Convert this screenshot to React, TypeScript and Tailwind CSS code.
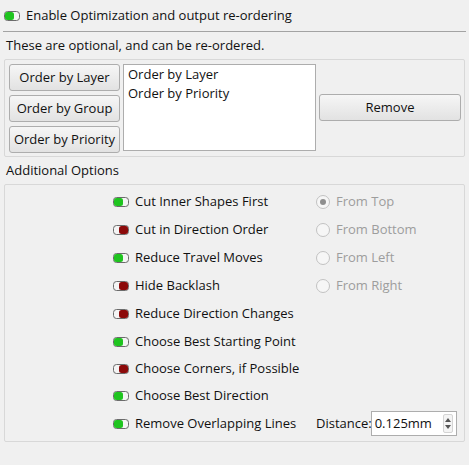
import React from 'react';

// Small pill switch used by the optimizer options: green knob when on, dark red when off.
function Toggle({ on }: { on: boolean }) {
  return (
    <svg width="16" height="10" viewBox="0 0 16 10" className="shrink-0">
      <rect x="0.5" y="0.5" width="15" height="9" rx="3" fill="#f4f4f4" stroke="#6b6b6b" />
      {on ? (
        <rect x="1" y="1" width="9" height="8" rx="2.5" fill="#1fc41f" />
      ) : (
        <rect x="6" y="1" width="9" height="8" rx="2.5" fill="#8c0a0a" />
      )}
    </svg>
  );
}

function Radio({ checked, label }: { checked?: boolean; label: string }) {
  return (
    <div className="flex items-center gap-[6px] text-[#9d9d9d]">
      <span className="w-[14px] h-[14px] rounded-full border border-[#c2c2c2] bg-[#f6f6f6] flex items-center justify-center">
        {checked && <span className="w-[6px] h-[6px] rounded-full bg-[#8e8e8e]" />}
      </span>
      <span>{label}</span>
    </div>
  );
}

function Button({ children, className = '' }: { children: React.ReactNode; className?: string }) {
  return (
    <button
      className={`border border-[#adadad] rounded-[3px] bg-gradient-to-b from-[#f6f6f6] to-[#e2e2e2] text-[#111] ${className}`}
    >
      {children}
    </button>
  );
}

const options: { label: string; on: boolean; right?: React.ReactNode }[] = [
  { label: 'Cut Inner Shapes First', on: true, right: <Radio checked label="From Top" /> },
  { label: 'Cut in Direction Order', on: false, right: <Radio label="From Bottom" /> },
  { label: 'Reduce Travel Moves', on: true, right: <Radio label="From Left" /> },
  { label: 'Hide Backlash', on: false, right: <Radio label="From Right" /> },
  { label: 'Reduce Direction Changes', on: false },
  { label: 'Choose Best Starting Point', on: true },
  { label: 'Choose Corners, if Possible', on: false },
  { label: 'Choose Best Direction', on: true },
];

export default function App() {
  return (
    <div
      className="w-[469px] h-[465px] bg-[#f0f0f0] text-[13px] text-[#111] overflow-hidden"
      style={{ fontFamily: '"Open Sans", "Noto Sans", sans-serif' }}
    >
      <div className="h-[31px] flex items-center gap-[6px] pl-[4px] pt-[1px]">
        <Toggle on />
        <span>Enable Optimization and output re-ordering</span>
      </div>
      <div className="mx-[3px] h-px bg-[#a3a3a3]" />
      <div className="h-[27px] flex items-center pl-[6px] pt-[1px]">These are optional, and can be re-ordered.</div>

      <div className="mx-[4px] h-[98px] border border-[#d8d8d8] rounded-[2px] flex items-start pt-[4px] pl-[4px] pr-[3px]">
        <div className="flex flex-col gap-[4px]">
          <Button className="w-[111px] h-[27px]">Order by Layer</Button>
          <Button className="w-[111px] h-[27px]">Order by Group</Button>
          <Button className="w-[111px] h-[27px]">Order by Priority</Button>
        </div>
        <div className="ml-[3px] w-[193px] h-[87px] bg-white border border-[#adadad] pl-[4px] leading-[19px]">
          <div>Order by Layer</div>
          <div>Order by Priority</div>
        </div>
        <Button className="ml-[3px] mt-[30px] flex-1 h-[27px]">Remove</Button>
      </div>

      <div className="h-[27px] flex items-center pl-[6px]">Additional Options</div>

      <div className="mx-[4px] h-[258px] border border-[#d8d8d8] rounded-[2px] pt-[3px]">
        {options.map((o, i) => (
          <div key={o.label} className={`flex items-center ${i < 5 ? 'h-[28px]' : 'h-[27px]'}`}>
            <div className="w-[311px] flex items-center gap-[6px] pl-[108px]">
              <Toggle on={o.on} />
              <span>{o.label}</span>
            </div>
            {o.right}
          </div>
        ))}
        <div className="flex items-center h-[29px]">
          <div className="w-[311px] flex items-center gap-[6px] pl-[108px]">
            <Toggle on />
            <span>Remove Overlapping Lines</span>
          </div>
          <span className="-mr-[1px]">Distance:</span>
          <div className="w-[86px] h-[25px] bg-white border border-[#adadad] flex items-center pl-[3px]">
            <span className="flex-1">0.125mm</span>
            <div className="w-[10px] h-[19px] mr-[3px] rounded-[2px] border border-[#d4d4d4] bg-[#f4f4f4] flex flex-col items-center justify-center gap-[3px]">
              <svg width="6" height="4" viewBox="0 0 6 4">
                <path d="M0 4 L3 0 L6 4 Z" fill="#555" />
              </svg>
              <svg width="6" height="4" viewBox="0 0 6 4">
                <path d="M0 0 L3 4 L6 0 Z" fill="#555" />
              </svg>
            </div>
          </div>
        </div>
      </div>
    </div>
  );
}
